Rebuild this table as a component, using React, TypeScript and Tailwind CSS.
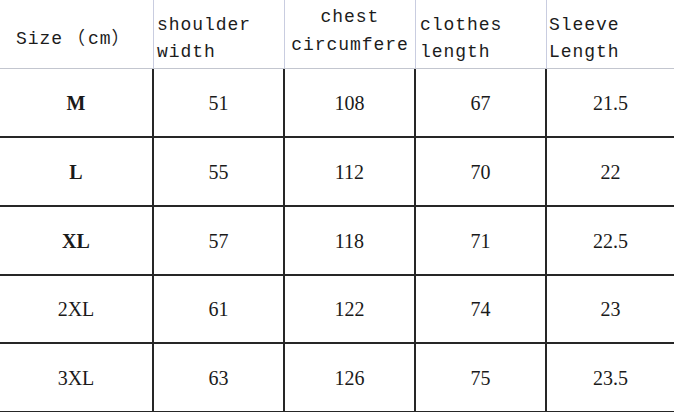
import React from "react";

const rows: { size: string; bold: boolean; vals: string[]; h: string }[] = [
  { size: "M", bold: true, vals: ["51", "108", "67", "21.5"], h: "h-[69px]" },
  { size: "L", bold: true, vals: ["55", "112", "70", "22"], h: "h-[69px]" },
  { size: "XL", bold: true, vals: ["57", "118", "71", "22.5"], h: "h-[69px]" },
  { size: "2XL", bold: false, vals: ["61", "122", "74", "23"], h: "h-[68px]" },
  { size: "3XL", bold: false, vals: ["63", "126", "75", "23.5"], h: "h-[69px]" },
];

const mono = "font-['Liberation_Mono','Noto_Sans_CJK_SC',monospace] text-[18px] leading-[27px] tracking-[0.95px] text-[#1c1c1c] whitespace-nowrap";

export default function App() {
  return (
    <div className="w-[674px] h-[412px] overflow-hidden bg-white">
      <div className="grid grid-cols-[154px_131px_131px_131px_1fr] h-[69px] border-b border-[#c3c6cf]">
        <div className={`${mono} border-r border-[#c9cde0] pl-[16px] pt-[26px]`}>
          Size<span className="ml-[4px] mr-[2px]">（</span>cm<span>）</span>
        </div>
        <div className={`${mono} border-r border-[#c9cde0] pl-[3px] pt-[12px]`}>
          <div>shoulder</div>
          <div>width</div>
        </div>
        <div className={`${mono} border-r border-[#c9cde0] text-center pt-[3px] leading-[28px] overflow-hidden`}>
          <div>chest</div>
          <div>circumfere</div>
        </div>
        <div className={`${mono} border-r border-[#c9cde0] pl-[4px] pt-[12px]`}>
          <div>clothes</div>
          <div>length</div>
        </div>
        <div className={`${mono} pl-[2px] pt-[12px]`}>
          <div>Sleeve</div>
          <div>Length</div>
        </div>
      </div>
      {rows.map((r) => (
        <div
          key={r.size}
          className={`grid grid-cols-[154px_131px_131px_131px_1fr] ${r.h} border-b-2 border-[#262626] font-['Liberation_Serif',serif] text-[20px] text-[#1a1a1a]`}
        >
          <div className={`flex items-center justify-center border-r-2 border-[#262626] ${r.bold ? "font-bold" : ""}`}>
            {r.size}
          </div>
          {r.vals.map((v, i) => (
            <div
              key={i}
              className={`flex items-center justify-center ${i < 3 ? "border-r-2 border-[#262626]" : ""}`}
            >
              {v}
            </div>
          ))}
        </div>
      ))}
    </div>
  );
}
